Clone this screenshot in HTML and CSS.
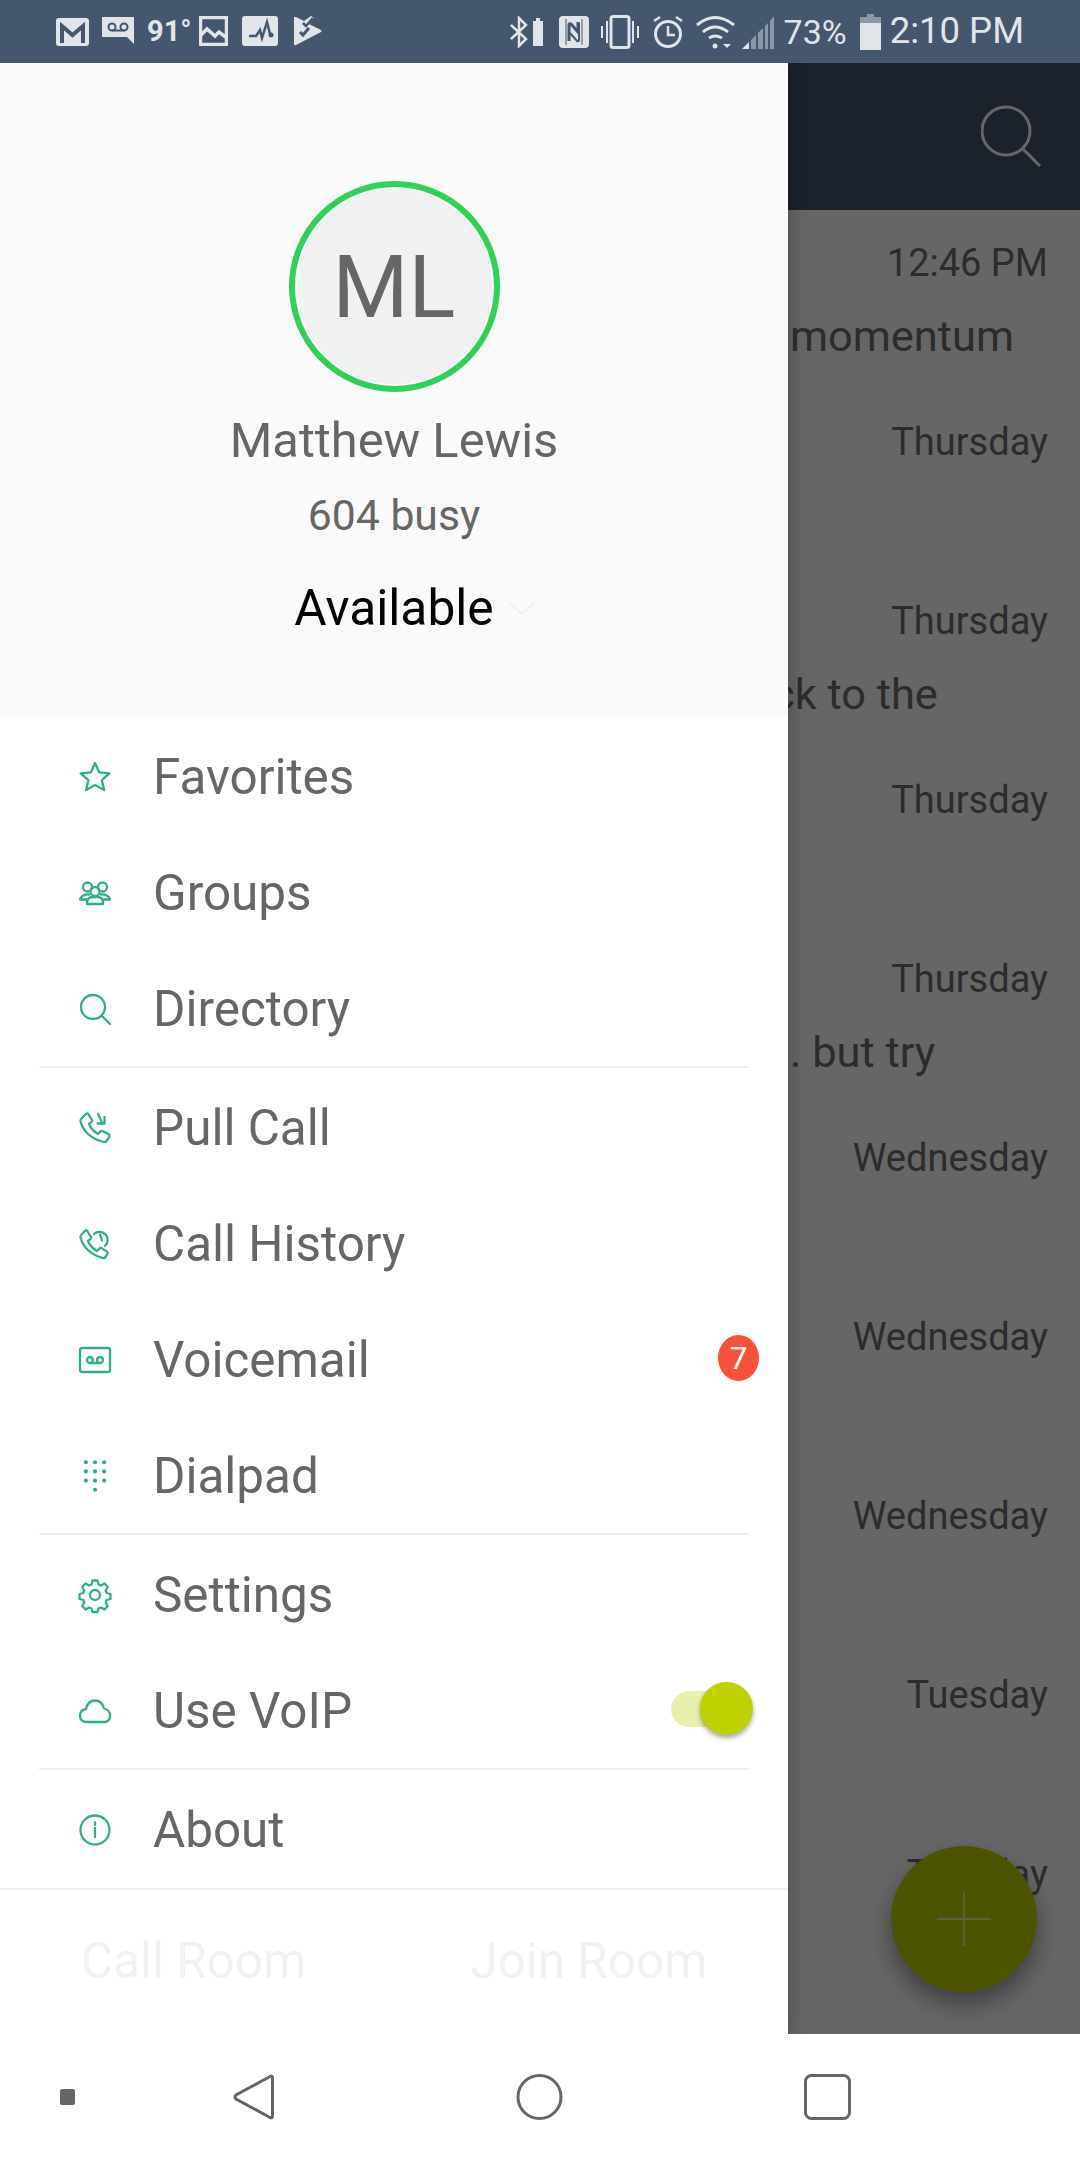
FILE: index.html
```html
<!DOCTYPE html>
<html lang="en">
<head>
<meta charset="utf-8">
<title>Menu</title>
<link rel="stylesheet" href="styles.css">
</head>
<body>
<div class="phone">
  <header class="status">
    <div class="status-left">
      <svg class="s-gmail" viewBox="0 0 33 28"><rect width="33" height="28" rx="3" fill="#e1e4e8"/><path d="M6 25V8l10.500 9L27 8v17" fill="none" stroke="#45566f" stroke-width="4"/></svg>
      <svg class="s-vm" viewBox="0 0 32 27"><path d="M0 0h32v27l-7-7H0z" fill="#e1e4e8"/><g fill="none" stroke="#45566f" stroke-width="2"><circle cx="10" cy="10" r="3.500"/><circle cx="22" cy="10" r="3.500"/><path d="M10 13.500h12"/></g></svg>
      <span class="s-temp">91°</span>
      <svg class="s-img" viewBox="0 0 29 30"><rect x="1.500" y="1.500" width="26" height="27" fill="none" stroke="#e1e4e8" stroke-width="3.500"/><path d="M2 19l6-6 8 7 4-4 8 6" fill="none" stroke="#e1e4e8" stroke-width="3.500"/></svg>
      <svg class="s-pulse" viewBox="0 0 36 30"><rect width="36" height="30" rx="3" fill="#e1e4e8"/><path d="M7 20h7l4-6 2 8 5-16 3 12" fill="none" stroke="#45566f" stroke-width="2.500"/><circle cx="29" cy="19" r="2.500" fill="#45566f"/></svg>
      <svg class="s-play" viewBox="0 0 28 30"><path d="M0 2q0-2 2-1l8 4 7-5 3 2-5 6 12 6q1 1 0 2L2 29q-2 1-2-1z" fill="#e1e4e8"/><path d="M6 16l3 3 6-7" fill="none" stroke="#45566f" stroke-width="3"/><path d="M9 7l3 3 7-8" fill="none" stroke="#45566f" stroke-width="2.500"/></svg>
    </div>
    <div class="status-right">
      <svg class="s-bt" viewBox="0 0 18 32"><path d="M1 9l15 14-7 7V2l7 7L1 23" fill="none" stroke="#e1e4e8" stroke-width="2.500"/></svg>
      <svg class="s-minibat" viewBox="0 0 10 28"><path d="M3 0h4v3h3v25H0V3h3z" fill="#e1e4e8"/></svg>
      <svg class="s-nfc" viewBox="0 0 30 32"><rect width="30" height="32" rx="4" fill="#e1e4e8"/><path d="M7 3v26M23 3v26" stroke="#45566f" stroke-width="1"/><path d="M10 25V9q0-2 2-1l7 8V6" fill="none" stroke="#45566f" stroke-width="3"/><path d="M20 7v17q0 2-2 1l-7-8" fill="none" stroke="#45566f" stroke-width="2"/></svg>
      <svg class="s-vib" viewBox="0 0 38 34"><rect x="10" y="1.500" width="18" height="31" rx="2" fill="none" stroke="#e1e4e8" stroke-width="3"/><path d="M1 11v12M6 6v22M32 6v22M37 11v12" stroke="#e1e4e8" stroke-width="2"/></svg>
      <svg class="s-alarm" viewBox="0 0 30 34"><circle cx="15" cy="19" r="12.500" fill="none" stroke="#e1e4e8" stroke-width="3"/><path d="M15 11v9h7M1 6l6-4M29 6l-6-4" fill="none" stroke="#e1e4e8" stroke-width="2.500"/></svg>
      <svg class="s-wifi" viewBox="0 0 39 34"><g fill="none" stroke="#e1e4e8" stroke-width="3"><path d="M1 10q18-15 37 0M7 17q12-10 25 0M13 23q6-4 13 0"/></g><circle cx="19" cy="31" r="2.500" fill="#e1e4e8"/><path d="M27 29h8l-4 4z" fill="#e1e4e8"/></svg>
      <svg class="s-sig" viewBox="0 0 32 34"><path d="M0 34l7-7v7z" fill="#e1e4e8"/><path d="M9 34v-9l5-5v14zM16 34V18l5-5v21zM23 34V11l3-3v26zM28 34V6l4-5v33z" fill="#8b98aa"/></svg>
      <span class="s-pct">73%</span>
      <svg class="s-bat" viewBox="0 0 21 36"><path d="M7 0h7v3h7v33H0V3h7z" fill="#e1e4e8"/><path d="M7 0h7v3h7v6H0V3h7z" fill="#8b98aa"/></svg>
      <span class="s-time">2:10 PM</span>
    </div>
  </header>

  <div class="screen">
    <div class="app">
      <div class="toolbar">
        <svg class="search" viewBox="0 0 60 62"><circle cx="25" cy="26" r="24" fill="none" stroke="#fff" stroke-width="3"/><path d="M42 44l17 17" stroke="#fff" stroke-width="3"/></svg>
      </div>
      <ul class="convos">
        <li class="convo"><span class="when">12:46 PM</span><span class="snippet">momentum</span></li>
        <li class="convo"><span class="when">Thursday</span></li>
        <li class="convo"><span class="when">Thursday</span><span class="snippet snippet-under">ck to the</span></li>
        <li class="convo"><span class="when">Thursday</span></li>
        <li class="convo"><span class="when">Thursday</span><span class="snippet">. but try</span></li>
        <li class="convo"><span class="when">Wednesday</span></li>
        <li class="convo"><span class="when">Wednesday</span></li>
        <li class="convo"><span class="when">Wednesday</span></li>
        <li class="convo"><span class="when">Tuesday</span></li>
        <li class="convo"><span class="when">Tuesday</span></li>
      </ul>
      <div class="fab"><svg viewBox="0 0 54 54"><path d="M27 0v54M0 27h54" stroke="#fff" stroke-width="2" opacity=".6"/></svg></div>
    </div>
    <div class="scrim"></div>

    <aside class="drawer">
      <section class="profile">
        <div class="avatar"><span>ML</span></div>
        <div class="name">Matthew Lewis</div>
        <div class="ext">604 busy</div>
        <div class="presence">
          <span>Available</span>
          <svg class="chev" viewBox="0 0 26 13"><path d="M1 1l12 11L25 1" fill="none" stroke="#f1f1f1" stroke-width="2"/></svg>
        </div>
      </section>

      <nav class="menu">
        <a class="row">
          <svg class="ico" viewBox="0 0 32 32"><path d="M16 2l4.200 9.300 10.300 1-7.700 6.800 2.300 10L16 24l-8.900 5.100 2.300-10-7.700-6.800 10.300-1z"/></svg>
          <span>Favorites</span>
        </a>
        <a class="row">
          <svg class="ico" viewBox="0 0 32 24"><circle cx="8.500" cy="6" r="4.500"/><circle cx="23.500" cy="6" r="4.500"/><circle cx="16" cy="10.500" r="4.500"/><path d="M10.500 13.500Q3 13 1 18.500h6.500M21.500 13.500Q29 13 31 18.500h-6.500M8 23v-1.500Q8 16.500 13 16h6q5 .5 5 5.500V23z"/></svg>
          <span>Groups</span>
        </a>
        <a class="row">
          <svg class="ico" viewBox="0 0 32 32"><circle cx="14" cy="14" r="12"/><path d="M23 23l8 8"/></svg>
          <span>Directory</span>
        </a>
        <hr class="rule">
        <a class="row">
          <svg class="ico" viewBox="0 0 32 32"><path d="M2.500 6.500 7.500 1.500Q8.500 1 9.200 2L13 8q.5 1-.4 1.900L10 12q2.500 6 9 10l2.600-2.600q1-.9 2-.3l6.400 3.500q1 .8.500 2L27.500 29q-1 1.500-3 1Q6 25 1.500 9.500q-.2-1.900 1-3z"/><path d="M19 2l4.500 9.500M18.500 11.500h7V5"/></svg>
          <span>Pull Call</span>
        </a>
        <a class="row">
          <svg class="ico" viewBox="0 0 32 32"><path d="M2.500 6.500 6.500 2.500Q7.500 2 8.200 3L12 9q.5 1-.4 1.900L9 13q2.500 6 9 10l2.600-2.600q1-.9 2-.3l5.400 3.500q1 .8.500 2L26.500 29q-1 1.500-3 1Q6 25 1.500 9.500q-.2-1.900 1-3z"/><path d="M15 6a8 8 0 1 1 11 12"/><path d="M21 6.500l2 6"/></svg>
          <span>Call History</span>
        </a>
        <a class="row">
          <svg class="ico" viewBox="0 0 32 26"><rect x="1" y="1" width="30" height="24" rx="2"/><circle cx="11" cy="13" r="3"/><circle cx="21" cy="13" r="3"/><path d="M11 16h10"/></svg>
          <span>Voicemail</span>
          <b class="badge">7</b>
        </a>
        <a class="row">
          <svg class="ico dots" viewBox="0 0 20 28"><g><circle cx="2" cy="2" r="1.800"/><circle cx="10" cy="2" r="1.800"/><circle cx="18" cy="2" r="1.800"/><circle cx="2" cy="10" r="1.800"/><circle cx="10" cy="10" r="1.800"/><circle cx="18" cy="10" r="1.800"/><circle cx="2" cy="18" r="1.800"/><circle cx="10" cy="18" r="1.800"/><circle cx="18" cy="18" r="1.800"/><circle cx="10" cy="26" r="1.800"/></g></svg>
          <span>Dialpad</span>
        </a>
        <hr class="rule">
        <a class="row">
          <svg class="ico" viewBox="0 0 32 32"><circle cx="16" cy="16" r="5"/><path d="M13.500 1.500h5l1 4 2.500 1 3.500-2 3.200 3.500-2 3.500 1 2.500 3.800 1v5l-3.800 1-1 2.500 2 3.500-3.200 3.500-3.500-2-2.500 1-1 3.500h-5l-1-3.500-2.500-1-3.500 2-3.200-3.500 2-3.500-1-2.500-3.800-1v-5l3.800-1 1-2.500-2-3.500L6.500 4.500l3.500 2 2.500-1z"/></svg>
          <span>Settings</span>
        </a>
        <a class="row">
          <svg class="ico" viewBox="0 0 32 24"><path d="M8 23Q1 23 1 16.500 1 11 7 10 9 1.500 16 1.500 23 1.500 25 9.500 31 11 31 16.500 31 23 25 23z"/></svg>
          <span>Use VoIP</span>
          <span class="switch"><i class="knob"></i></span>
        </a>
        <hr class="rule">
        <a class="row">
          <svg class="ico" viewBox="0 0 32 32"><circle cx="16" cy="16" r="14.500"/><path d="M16 14v9M16 8.500v2.500"/></svg>
          <span>About</span>
        </a>
      </nav>

      <footer class="actions">
        <span class="act-call">Call Room</span>
        <span class="act-join">Join Room</span>
      </footer>
    </aside>
  </div>

  <footer class="navbar">
    <span class="nav-dot"></span>
    <svg class="nav-ico" viewBox="0 0 41 46"><path d="M37 2.500q2.500-1 2.500 1.500v38q0 2.500-2.500 1.500L3 25q-2-2 0-4z" fill="none" stroke="#666" stroke-width="3"/></svg>
    <svg class="nav-ico" viewBox="0 0 47 46"><circle cx="23.500" cy="23" r="21.500" fill="none" stroke="#666" stroke-width="3"/></svg>
    <svg class="nav-ico" viewBox="0 0 47 46"><rect x="1.500" y="1.500" width="44" height="43" rx="6" fill="none" stroke="#666" stroke-width="3"/></svg>
  </footer>
</div>
</body>
</html>
```

FILE: styles.css
```css
* { box-sizing: border-box; }
html, body { margin: 0; padding: 0; }
body { font-family: Roboto, "Liberation Sans", sans-serif; background: #fff; }

.phone { width: 1080px; height: 2160px; display: flex; flex-direction: column; overflow: hidden; }

/* status bar */
.status { height: 63px; flex: none; background: #45566f; color: #e1e4e8; display: flex; justify-content: space-between; align-items: center; padding: 0 56px; }
.status svg { display: block; flex: none; }
.status-left, .status-right { display: flex; align-items: center; }
.status-left { gap: 14px; }
.s-gmail { width: 33px; height: 28px; }
.s-vm { width: 32px; height: 27px; margin-left: -1px; margin-top: -2px; }
.s-temp { font-family: "Liberation Sans Narrow", Roboto, sans-serif; font-weight: 700; font-size: 29px; line-height: 1; width: 39px; margin-left: -1px; }
.s-img { width: 29px; height: 30px; margin-top: -1px; margin-left: -1px; }
.s-pulse { width: 36px; height: 30px; margin-top: -1px; }
.s-play { width: 28px; height: 30px; margin-left: 2px; margin-top: -1px; }
.s-bt { width: 18px; height: 32px; }
.s-minibat { width: 10px; height: 28px; margin-left: 5px; }
.s-nfc { width: 30px; height: 32px; margin-left: 16px; }
.s-vib { width: 38px; height: 34px; margin-left: 12px; }
.s-alarm { width: 30px; height: 34px; margin-left: 14px; }
.s-wifi { width: 39px; height: 34px; margin-left: 13px; }
.s-sig { width: 32px; height: 34px; margin-left: 7px; }
.s-pct { font-size: 34px; line-height: 1; margin-left: 10px; }
.s-bat { width: 21px; height: 36px; margin-left: 13px; }
.s-time { font-size: 36.5px; line-height: 1; margin-left: 9px; }

/* content area */
.screen { position: relative; flex: 1; min-height: 0; overflow: hidden; }
.app { height: 100%; background: #fff; display: flex; flex-direction: column; }
.toolbar { height: 147px; flex: none; background: #45566f; display: flex; justify-content: flex-end; align-items: center; padding-right: 39px; }
.search { width: 60px; height: 62px; margin-top: -1px; }
.convos { list-style: none; margin: 0; padding: 0; }
.convo { height: 179px; padding: 31px 32px 0 0; display: flex; flex-direction: column; color: #6f6f6f; }
.when { align-self: flex-end; font-size: 38px; line-height: 44px; }
.snippet { margin-left: 790px; font-size: 43.4px; line-height: 50px; margin-top: 27px; white-space: nowrap; }
.snippet-under { margin-left: 772px; }

.fab { position: absolute; left: 891px; top: 1783px; width: 146px; height: 146px; border-radius: 50%; background: #c0d100; display: flex; align-items: center; justify-content: center; box-shadow: 0 12px 24px rgba(0,0,0,.4); }
.fab svg { width: 54px; height: 54px; }

.scrim { position: absolute; inset: 0; background: rgba(0,0,0,.6); }

/* drawer */
.drawer { position: absolute; left: 0; top: 0; bottom: 0; width: 788px; background: #fff; display: flex; flex-direction: column; box-shadow: 0 0 18px rgba(0,0,0,.3); color: #666; }
.profile { height: 653px; flex: none; background: #fafafa; display: flex; flex-direction: column; align-items: center; padding-top: 118px; }
.avatar { width: 211px; height: 211px; border-radius: 50%; border: 6px solid #2fd158; padding: 2px; background: #fafafa; background-clip: padding-box; }
.avatar span { display: flex; width: 100%; height: 100%; border-radius: 50%; background: #f0f1f1; align-items: center; justify-content: center; font-size: 87px; line-height: 1; color: #666; padding-top: 2px; }
.name { font-size: 48.800px; line-height: 56px; margin-top: 21px; }
.ext { font-size: 42.700px; line-height: 50px; margin-top: 21px; }
.presence { position: relative; color: #000; font-size: 49.700px; line-height: 56px; margin-top: 40px; }
.chev { position: absolute; left: 215px; top: 22px; width: 26px; height: 13px; }

.menu { padding-top: 3px; flex: none; }
.row { height: 116px; display: flex; align-items: center; font-size: 49.400px; padding-left: 79px; position: relative; }
.row > span:first-of-type { margin-left: 42px; }
.ico { width: 32px; height: 32px; flex: none; fill: none; stroke: #2fae8a; stroke-width: 2.300; stroke-linejoin: round; stroke-linecap: round; overflow: visible; }
.ico.dots { fill: #2fae8a; stroke: none; }
.rule { height: 2px; border: 0; background: #efefef; margin: -1px 39px 2px; }
.badge { position: absolute; left: 718px; top: 33px; width: 41px; height: 46px; border-radius: 50%; background: #f9503a; color: #fff; font-size: 32px; font-weight: 400; display: flex; align-items: center; justify-content: center; }
.switch { position: absolute; left: 671px; top: 38px; width: 70px; height: 36px; border-radius: 18px; background: #e9f0ad; }
.knob { position: absolute; left: 29px; top: -9px; width: 53px; height: 53px; border-radius: 50%; background: #c0d100; box-shadow: 0 3px 5px rgba(0,0,0,.35); }

.actions { flex: 1; border-top: 2px solid #efefef; display: flex; align-items: center; color: #f1f1f1; font-size: 49.400px; padding-left: 81px; gap: 164px; padding-bottom: 2px; }

/* nav bar */
.navbar { height: 126px; flex: none; background: #fff; display: flex; align-items: center; padding: 0 0 0 60px; }
.nav-dot { width: 15px; height: 16px; border-radius: 2px; background: #666; }
.nav-ico { height: 46px; flex: none; display: block; }
.nav-ico:nth-of-type(1) { width: 41px; margin-left: 158px; }
.nav-ico:nth-of-type(2) { width: 47px; margin-left: 242px; }
.nav-ico:nth-of-type(3) { width: 47px; margin-left: 241px; }
```
